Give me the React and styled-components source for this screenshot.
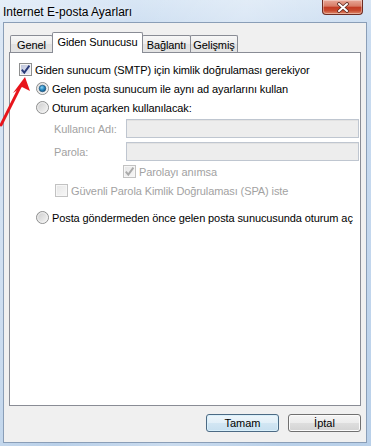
import React from 'react';
import styled, { createGlobalStyle } from 'styled-components';

const GlobalStyle = createGlobalStyle`
  html, body { margin: 0; padding: 0; background: #c4d8ee; }
  body { font-family: "Liberation Sans", Arial, sans-serif; font-size: 11px; }
  * { box-sizing: border-box; }
`;

const Window = styled.div`
  position: relative;
  width: 371px;
  height: 446px;
  display: flex;
  flex-direction: column;
  padding: 0 4px 3px 3px;
  overflow: hidden;
  background:
    linear-gradient(100deg, rgba(255,255,255,0.35) 0%, rgba(255,255,255,0) 30%, rgba(255,255,255,0.25) 55%, rgba(255,255,255,0) 80%),
    linear-gradient(to bottom, #d8e6f5 0%, #cadcf0 8%, #c2d6ed 60%, #b9d0e9 100%);
`;

const TitleBar = styled.div`
  height: 22px;
  display: flex;
  align-items: flex-start;
  justify-content: space-between;
`;

const Title = styled.div`
  font-size: 12px;
  line-height: 14px;
  padding-top: 5px;
  color: #000;
  text-shadow: 0 0 6px rgba(255,255,255,0.9);
`;

const CloseButton = styled.div`
  width: 41px;
  height: 15px;
  margin-right: 4px;
  border: 1px solid #6e2c22;
  border-top: none;
  border-radius: 0 0 4px 4px;
  background: linear-gradient(to bottom, #e8a898 0%, #d77a64 45%, #c23a22 50%, #c84a2e 75%, #de8a6c 100%);
  box-shadow: inset 0 0 0 1px rgba(255,255,255,0.35);
  display: flex;
  align-items: center;
  justify-content: center;
`;

const Client = styled.div`
  flex: 1;
  display: flex;
  flex-direction: column;
  background: #f0f0f0;
  border: 1px solid #8a9eb7;
  padding: 9px 5px 0 5px;
`;

const TabStrip = styled.div`
  height: 21px;
  display: flex;
  align-items: flex-end;
  padding-left: 1px;
  margin-bottom: -1px;
  position: relative;
  z-index: 1;
`;

const Tab = styled.div`
  width: ${p => p.$w}px;
  height: ${p => (p.$active ? 21 : 17)}px;
  margin-bottom: ${p => (p.$active ? 0 : 1)}px;
  margin-left: ${p => (p.$first ? 0 : -1)}px;
  border: 1px solid #898c95;
  border-bottom: none;
  border-radius: 2px 2px 0 0;
  background: ${p => (p.$active ? '#fff' : 'linear-gradient(to bottom, #f7f7f7 0%, #ececec 50%, #e1e1e1 51%, #e4e4e4 100%)')};
  position: relative;
  z-index: ${p => (p.$active ? 2 : 1)};
  display: flex;
  justify-content: center;
  align-items: flex-start;
  padding-top: 3px;
  line-height: 13px;
  letter-spacing: -0.1px;
  color: #000;
  white-space: nowrap;
`;

const Panel = styled.div`
  flex: 1;
  background: #fff;
  border: 1px solid #898c95;
  padding-top: 7px;
  display: flex;
  flex-direction: column;
  letter-spacing: -0.1px;
`;

const Row = styled.div`
  display: flex;
  align-items: center;
  height: 19px;
  margin-top: ${p => p.$mt || 0}px;
  padding-left: ${p => p.$indent || 0}px;
  gap: 3px;
  color: ${p => (p.$disabled ? '#a2a2a2' : '#000')};
  white-space: nowrap;
`;

const FieldLabel = styled.div`
  width: 69px;
  color: #a2a2a2;
`;

const Field = styled.div`
  width: 233px;
  height: 19px;
  border: 1px solid #bfc6d0;
  background: #ededed;
  box-shadow: inset 0 1px 0 #e2e2e2;
`;

const BoxWrap = styled.span`
  width: 13px;
  height: 13px;
  flex: none;
  border: 1px solid ${p => (p.$disabled ? '#c2c2c2' : '#8e8f8f')};
  background: ${p => (p.$disabled ? 'linear-gradient(135deg, #e6e6e6, #f7f7f7)' : 'linear-gradient(135deg, #b9c0d6 0%, #d9dded 60%, #f0f1f6 100%)')};
  box-shadow: inset 0 0 0 1px #f6f6f6;
  display: flex;
  align-items: center;
  justify-content: center;
`;

const ButtonBar = styled.div`
  height: 36px;
  display: flex;
  justify-content: flex-end;
  align-items: flex-start;
  padding-top: 8px;
  gap: 9px;
`;

const Button = styled.button`
  width: 73px;
  height: 18px;
  padding: 0;
  font: inherit;
  font-size: 11px;
  color: #000;
  border: 1px solid ${p => (p.$default ? '#4c6a84' : '#707070')};
  border-radius: 3px;
  background: ${p => (p.$default
    ? 'linear-gradient(to bottom, #eef6fb 0%, #e2eff8 50%, #d2e6f3 51%, #c7dfef 100%)'
    : 'linear-gradient(to bottom, #f4f4f4 0%, #ececec 50%, #dedede 51%, #d3d3d3 100%)')};
  box-shadow: inset 0 0 0 1px ${p => (p.$default ? '#d9f0fb' : '#fbfbfb')};
`;

const ArrowSvg = styled.svg`
  position: absolute;
  left: 0;
  top: 70px;
  z-index: 5;
  pointer-events: none;
`;

function CheckBox({ checked, disabled }) {
  return (
    <BoxWrap $disabled={disabled}>
      {checked && (
        <svg width="11" height="11" viewBox="0 0 11 11">
          <path d="M1.8 5.6 L4.3 8.6 L9.4 1.6" fill="none" stroke={disabled ? '#aaaaaa' : '#2a3a78'} strokeWidth="1.9" strokeLinejoin="miter" />
        </svg>
      )}
    </BoxWrap>
  );
}

function Radio({ checked }) {
  return (
    <svg width="13" height="13" viewBox="0 0 13 13" style={{ flex: 'none' }}>
      <defs>
        <linearGradient id="rg" x1="0" y1="0" x2="1" y2="1">
          <stop offset="0" stopColor="#c9c9c9" />
          <stop offset="1" stopColor="#f8f8f8" />
        </linearGradient>
        <radialGradient id="rd" cx="0.4" cy="0.35" r="0.7">
          <stop offset="0" stopColor="#8fd3f2" />
          <stop offset="0.5" stopColor="#2a8bc4" />
          <stop offset="1" stopColor="#0d4f7e" />
        </radialGradient>
      </defs>
      <circle cx="6.5" cy="6.5" r="6" fill="url(#rg)" stroke="#8e8f8f" strokeWidth="1" />
      <circle cx="6.5" cy="6.5" r="4.8" fill="none" stroke="#f4f4f4" strokeWidth="0.8" />
      {checked && <circle cx="6.5" cy="6.5" r="3.3" fill="url(#rd)" stroke="#1b4e73" strokeWidth="0.6" />}
    </svg>
  );
}

export default function App() {
  return (
    <>
      <GlobalStyle />
      <Window>
        <TitleBar>
          <Title>Internet E-posta Ayarları</Title>
          <CloseButton>
            <svg width="14" height="11" viewBox="0 0 14 11">
              <path d="M3 2 L11 9 M11 2 L3 9" stroke="#5a2a22" strokeWidth="3.6" strokeLinecap="round" />
              <path d="M3 2 L11 9 M11 2 L3 9" stroke="#ffffff" strokeWidth="2" strokeLinecap="round" />
            </svg>
          </CloseButton>
        </TitleBar>
        <Client>
          <TabStrip>
            <Tab $first $w={43}>Genel</Tab>
            <Tab $active $w={91}>Giden Sunucusu</Tab>
            <Tab $w={49}>Bağlantı</Tab>
            <Tab $w={48}>Gelişmiş</Tab>
          </TabStrip>
          <Panel>
            <Row $indent={9}>
              <CheckBox checked />
              <span>Giden sunucum (SMTP) için kimlik doğrulaması gerekiyor</span>
            </Row>
            <Row $indent={26}>
              <Radio checked />
              <span>Gelen posta sunucum ile aynı ad ayarlarını kullan</span>
            </Row>
            <Row $indent={26}>
              <Radio />
              <span>Oturum açarken kullanılacak:</span>
            </Row>
            <Row $indent={44} $mt={2}>
              <FieldLabel>Kullanıcı Adı:</FieldLabel>
              <Field />
            </Row>
            <Row $indent={44} $mt={4}>
              <FieldLabel>Parola:</FieldLabel>
              <Field />
            </Row>
            <Row $indent={113} $mt={1} $disabled>
              <CheckBox checked disabled />
              <span>Parolayı anımsa</span>
            </Row>
            <Row $indent={45} $disabled>
              <CheckBox disabled />
              <span>Güvenli Parola Kimlik Doğrulaması (SPA) iste</span>
            </Row>
            <Row $indent={26} $mt={8}>
              <Radio />
              <span>Posta göndermeden önce gelen posta sunucusunda oturum aç</span>
            </Row>
          </Panel>
          <ButtonBar>
            <Button $default>Tamam</Button>
            <Button>İptal</Button>
          </ButtonBar>
        </Client>
        <ArrowSvg width="34" height="60" viewBox="0 0 34 60">
          <path d="M1 55 L20 17" stroke="#e8141b" strokeWidth="2.8" strokeLinecap="round" />
          <polygon points="25,7 30,21 22,17 13,23" fill="#e8141b" />
        </ArrowSvg>
      </Window>
    </>
  );
}
